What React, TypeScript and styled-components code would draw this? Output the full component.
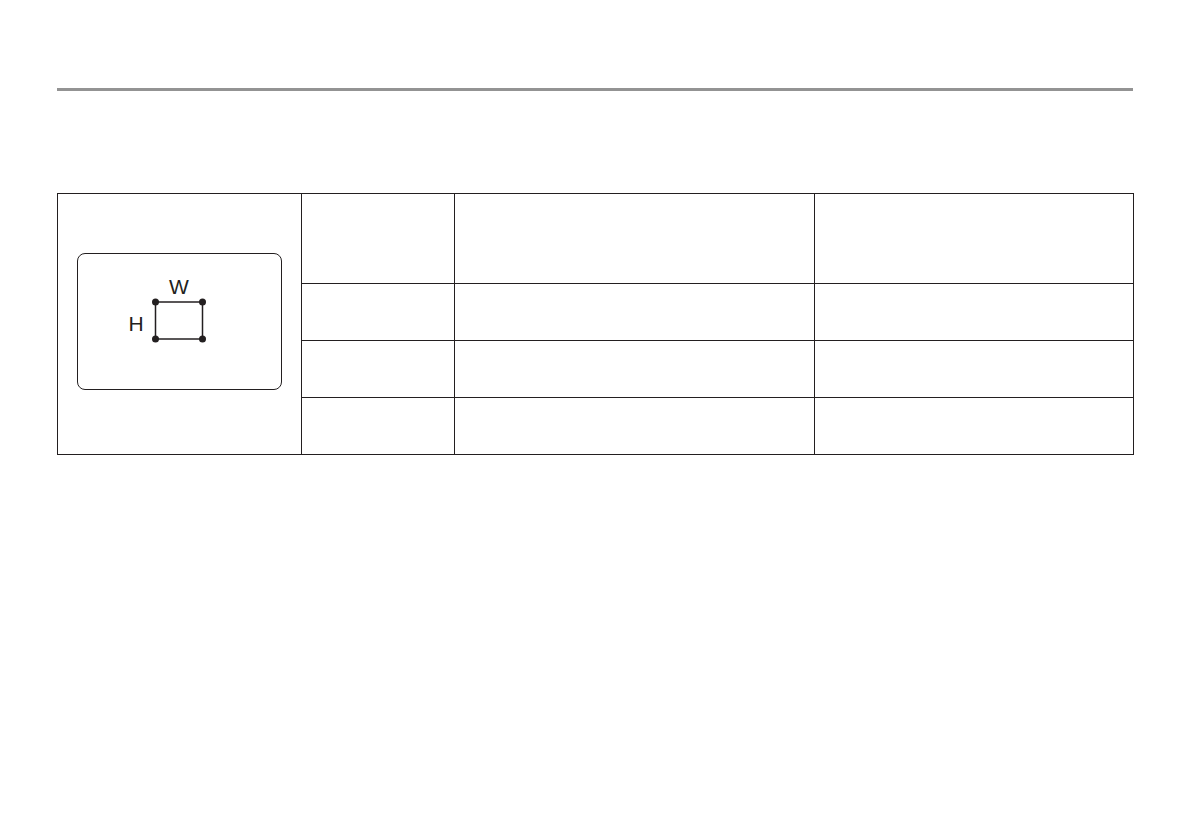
import React from 'react';
import { styled, createGlobalStyle } from 'styled-components';

const GlobalStyle = createGlobalStyle`
  html, body {
    margin: 0;
    padding: 0;
    background: #ffffff;
    font-family: 'Liberation Sans', Arial, sans-serif;
  }
`;

const Page = styled.div`
  width: 1191px;
  height: 822px;
  padding: 88px 58px 0 57px;
  box-sizing: border-box;
`;

const Rule = styled.hr`
  margin: 0;
  border: none;
  height: 3px;
  background-color: #939393;
`;

const SpecTable = styled.table`
  margin-top: 102px;
  width: 1076px;
  border-collapse: collapse;
  table-layout: fixed;
`;

const Cell = styled.td<{ $h?: number }>`
  border: 1px solid #231f20;
  height: ${(p) => (p.$h ? `${p.$h}px` : 'auto')};
  padding: 0;
  box-sizing: border-box;
`;

const FigureCell = styled(Cell)`
  vertical-align: top;
`;

const FigureBox = styled.div`
  margin: 59px 0 0 19px;
  width: 205px;
  height: 137px;
  box-sizing: border-box;
  border: 1.5px solid #231f20;
  border-radius: 8px;

  svg {
    display: block;
  }
`;

const Label = styled.text`
  font-family: 'Liberation Sans', Arial, sans-serif;
  font-size: 21px;
  fill: #231f20;
`;

function SizeFigure() {
  const dots: [number, number][] = [
    [77.5, 48],
    [124.5, 48],
    [77.5, 85],
    [124.5, 85],
  ];
  return (
    <FigureBox>
      <svg width="202" height="134" viewBox="0 0 202 134">
        <rect x="77.5" y="48" width="47" height="37" fill="none" stroke="#231f20" strokeWidth="1.5" />
        {dots.map(([cx, cy]) => (
          <circle key={`${cx}-${cy}`} cx={cx} cy={cy} r="3.5" fill="#231f20" />
        ))}
        <Label x="101" y="40" textAnchor="middle">W</Label>
        <Label x="58" y="77" textAnchor="middle">H</Label>
      </svg>
    </FigureBox>
  );
}

export default function App() {
  return (
    <Page>
      <GlobalStyle />
      <Rule />
      <SpecTable>
        <colgroup>
          <col style={{ width: 244 }} />
          <col style={{ width: 153 }} />
          <col style={{ width: 360 }} />
          <col style={{ width: 319 }} />
        </colgroup>
        <tbody>
          <tr>
            <FigureCell rowSpan={4}>
              <SizeFigure />
            </FigureCell>
            <Cell $h={90} />
            <Cell />
            <Cell />
          </tr>
          {[0, 1, 2].map((i) => (
            <tr key={i}>
              <Cell $h={57} />
              <Cell />
              <Cell />
            </tr>
          ))}
        </tbody>
      </SpecTable>
    </Page>
  );
}
